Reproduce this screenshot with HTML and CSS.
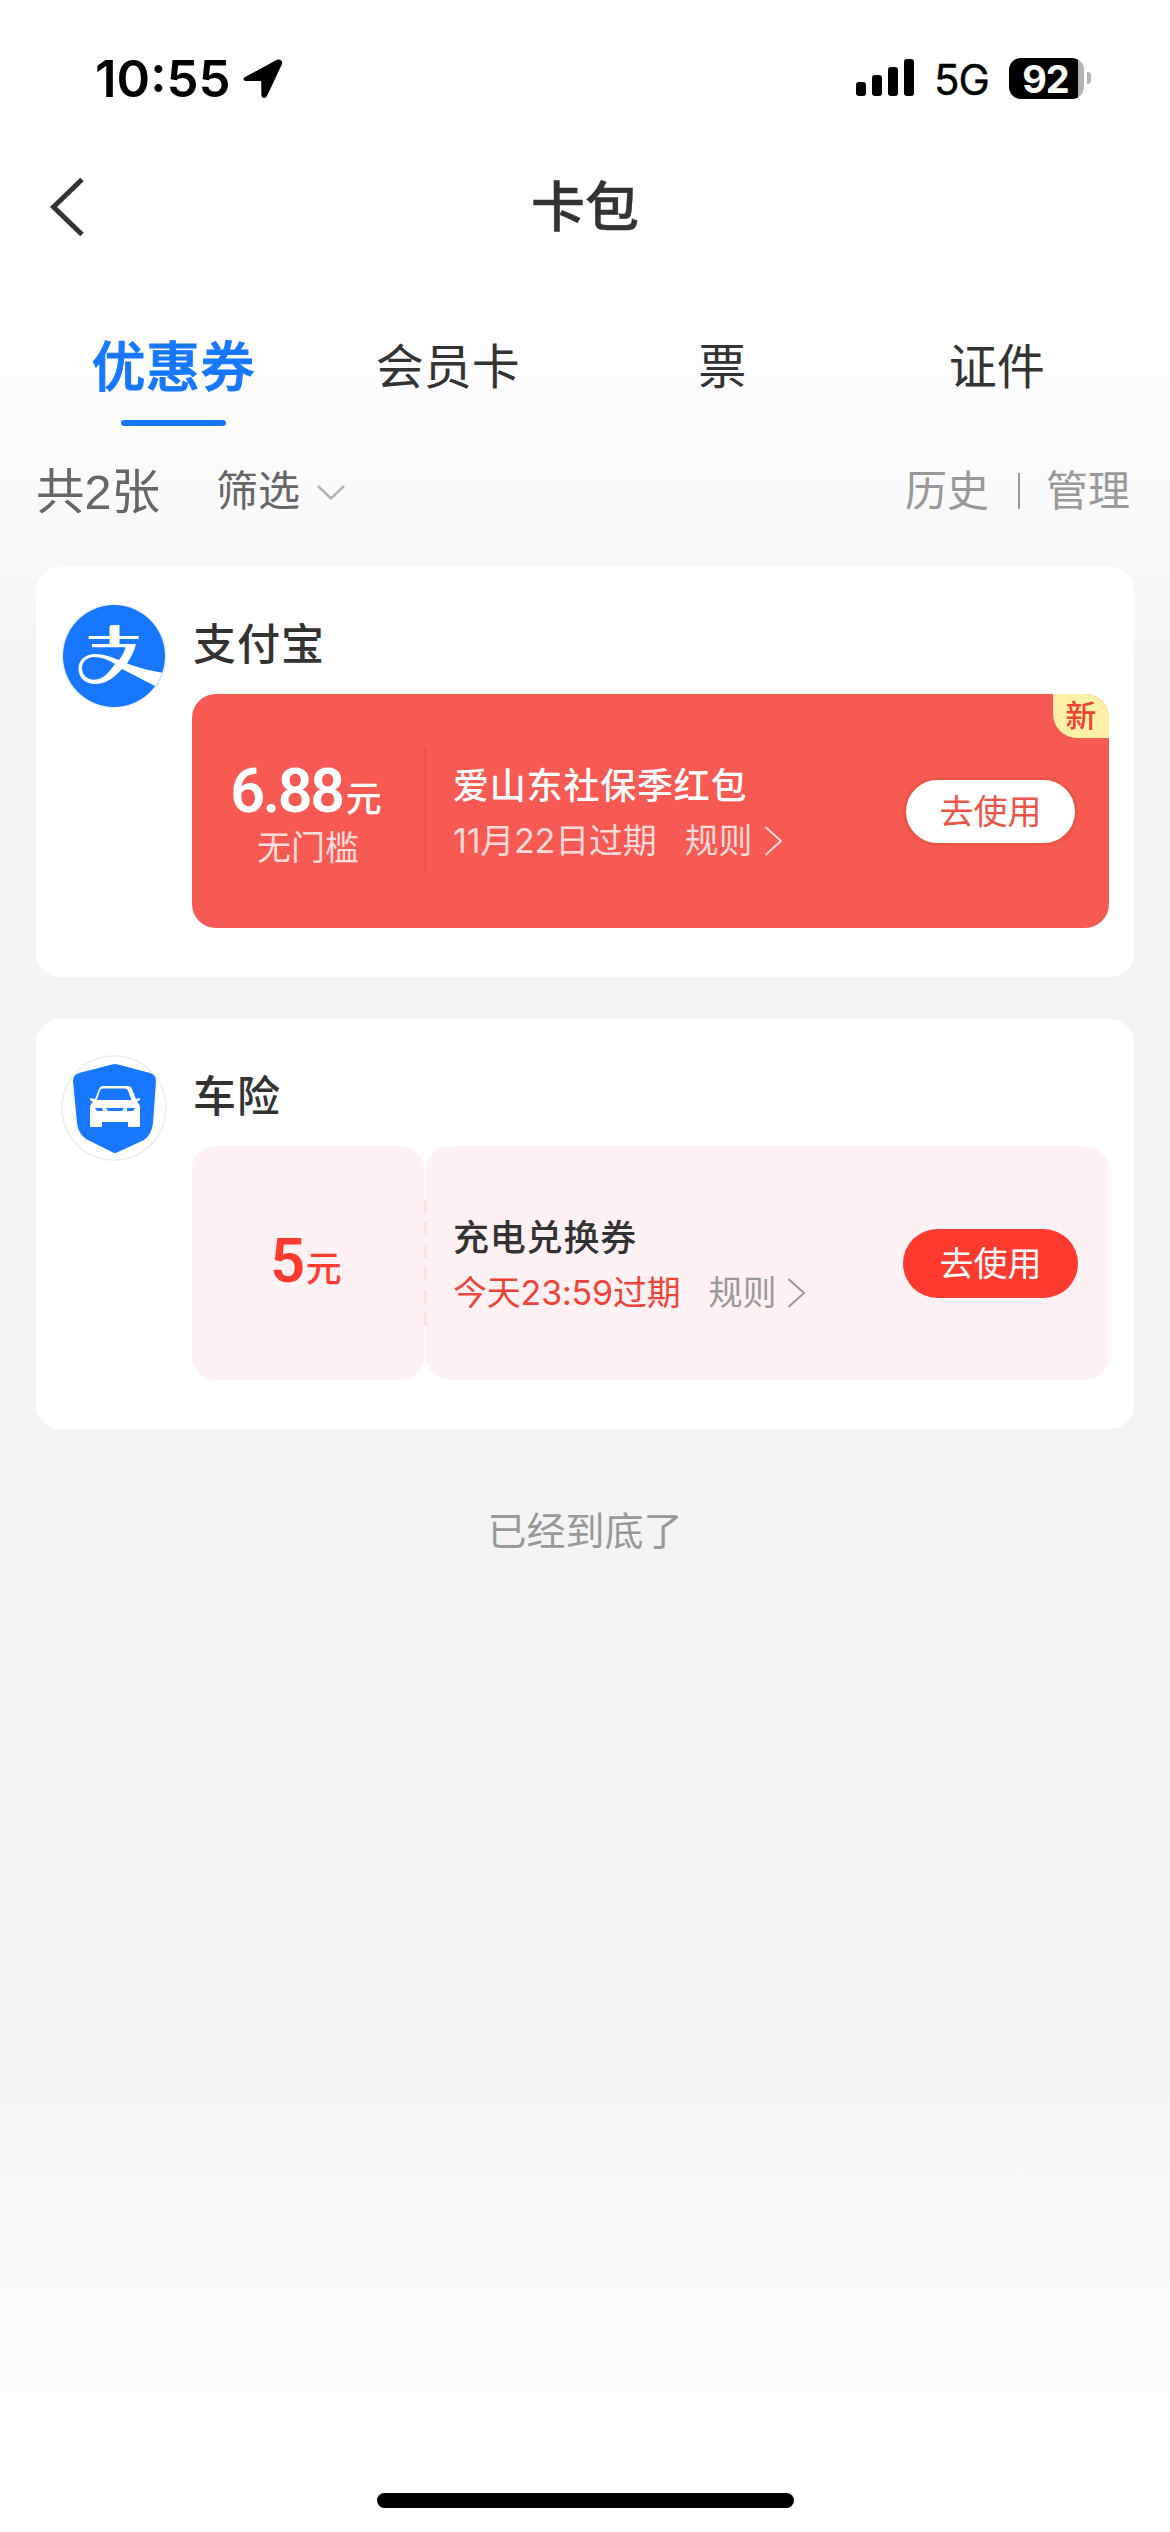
FILE: index.html
```html
<!DOCTYPE html>
<html lang="zh-CN">
<head>
<meta charset="utf-8">
<title>卡包</title>
<link rel="stylesheet" href="styles.css">
</head>
<body>
<header class="status">
  <div class="status-left">
    <span class="time">10:55</span>
    <svg class="location" width="40" height="40" viewBox="0 0 40 40"><path d="M3 17.500 33.500 1C37 -.6 40.300 2 38.800 5.500L24 37C22.600 40 18.500 39.500 18.400 36L18.200 22H4C-.2 22-.8 19.300 3 17.500Z"/></svg>
  </div>
  <div class="status-right">
    <svg class="signal" width="58" height="38" viewBox="0 0 58 38"><rect y="23" width="10" height="14" rx="3"/><rect x="16" y="16" width="10" height="21" rx="3"/><rect x="32" y="8" width="10" height="29" rx="3"/><rect x="48" width="10" height="37" rx="3"/></svg>
    <span class="network">5G</span>
    <div class="battery"><span class="battery-level">92</span></div>
    <span class="battery-tip"></span>
  </div>
</header>
<nav class="navbar">
  <svg class="back" width="36" height="58" viewBox="0 0 36 58"><path d="M33 1.500 4.500 29 33 56.500"/></svg>
  <h1 class="page-title">卡包</h1>
</nav>
<div class="tabs">
  <a class="tab tab-active">优惠券</a>
  <a class="tab">会员卡</a>
  <a class="tab">票</a>
  <a class="tab">证件</a>
</div>
<div class="toolbar">
  <span class="count">共2张</span>
  <span class="filter">筛选</span>
  <svg class="filter-arrow" width="28" height="16" viewBox="0 0 28 16"><path d="M1 1 14 13.500 27 1"/></svg>
  <span class="action">历史</span>
  <span class="divider"></span>
  <span class="action">管理</span>
</div>
<main class="cards">
  <section class="card">
    <svg class="logo" width="108" height="108" viewBox="0 0 108 108">
      <defs><clipPath id="disc"><circle cx="54" cy="54" r="51"/></clipPath></defs>
      <circle cx="54" cy="54" r="52.500" fill="#e8f0fc"/>
      <circle cx="54" cy="54" r="51" fill="#1777ff"/>
      <g clip-path="url(#disc)" fill="#fff">
        <path d="M49.500 25q0-2 2-2H59.500V42H49.500ZM28.700 34H78.700V37H28.700Z"/>
        <path fill-rule="evenodd" d="M32 42H76C74 50 70.500 56 67 61.500C79 66 91 69 104 71L97 85C85 79 74 73 62 67C53 77 45 82 35 82C25 82 18.500 75.500 18.500 66.500C18.500 57.500 26 52 35 52C44 52 51 55 59 58C62 54 64.500 50 65.500 45.300H32ZM55 62C48 57.500 41 55 34 55C27 55 22 60 22 66C22 73 27 77.700 34 77.700C43 77.700 49 70.500 55 62Z"/>
      </g>
    </svg>
    <div class="card-body">
      <h2 class="merchant">支付宝</h2>
      <div class="coupon coupon-red">
        <div class="value">
          <div class="amount"><span class="number">6.88</span><span class="unit">元</span></div>
          <div class="condition">无门槛</div>
        </div>
        <span class="seam"></span>
        <div class="info">
          <h3 class="coupon-title">爱山东社保季红包</h3>
          <div class="meta"><span class="expiry">11月22日过期</span><span class="rule">规则</span><svg class="rule-arrow" width="20" height="30" viewBox="0 0 20 30"><path d="M1.500 1 17 15 1.500 29"/></svg></div>
        </div>
        <a class="use">去使用</a>
        <span class="badge">新</span>
      </div>
    </div>
  </section>
  <section class="card">
    <svg class="logo" width="108" height="108" viewBox="0 0 108 108">
      <circle cx="54" cy="54" r="52" fill="#fff" stroke="#ececee" stroke-width="1.500"/>
      <path fill="#1777ff" d="M52 10.500q3-1 6 0L90 19q6 2 6 8l-3 42q-1 11-9 17L58 98q-3 2-6 0L26 85q-8-6-9-16L13 27q0-6 6-8Z"/>
      <path fill="#fff" d="M43 32h24q4 0 5 3l4 10 4-1v2l-3 2q3 2 3 6v18q0 1-1 1H69q-1 0-1-1v-4H42v4q0 1-1 1H31q-1 0-1-1V54q0-4 3-6l-3-2v-2l5 1 4-10q1-3 4-3Z"/>
      <path fill="#1777ff" d="M43 34.500h22q2 0 3 2l3.500 9.500H37l3-9.500q1-2 3-2ZM35 54h7l1 3h-6ZM46 54h18l-2 3H48ZM67 54h8l-2 3h-6Z"/>
    </svg>
    <div class="card-body">
      <h2 class="merchant">车险</h2>
      <div class="coupon coupon-pink">
        <div class="value">
          <div class="amount"><span class="number">5</span><span class="unit">元</span></div>
        </div>
        <span class="seam"></span>
        <div class="info">
          <h3 class="coupon-title">充电兑换券</h3>
          <div class="meta"><span class="expiry">今天23:59过期</span><span class="rule">规则</span><svg class="rule-arrow" width="20" height="30" viewBox="0 0 20 30"><path d="M1.500 1 17 15 1.500 29"/></svg></div>
        </div>
        <a class="use">去使用</a>
      </div>
    </div>
  </section>
</main>
<p class="end">已经到底了</p>
<div class="home"></div>
</body>
</html>
```
FILE: styles.css
```css
* { box-sizing: border-box; }
body {
  margin: 0;
  width: 1170px;
  height: 2532px;
  display: flex;
  flex-direction: column;
  overflow: hidden;
  font-family: "Liberation Sans", "Noto Sans CJK SC", sans-serif;
  color: #333;
  background: linear-gradient(#fff 0, #fff 290px, #fafafa 480px, #f4f4f4 700px, #f4f4f4 2030px, #fff 2490px);
}
h1, h2, h3, p { margin: 0; font-weight: 500; }

.status {
  height: 156px;
  padding: 0 79px 0 95px;
  display: flex;
  justify-content: space-between;
  color: #000;
  font-family: Inter, sans-serif;
}
.status-left, .status-right { display: flex; height: 156px; align-items: center; }
.time { font-size: 51px; font-weight: 600; letter-spacing: 0; line-height: 60px; width: 148px; padding-top: 1px; white-space: nowrap; }
.location { margin-top: 1px; }
.network { margin: 4px 0 0 20px; width: 56px; font-size: 42px; font-weight: 400; letter-spacing: -1px; line-height: 50px; -webkit-text-stroke: .4px #000; }
.battery {
  margin-left: 19px;
  width: 75px;
  height: 41px;
  border-radius: 12px;
  background: linear-gradient(90deg, #000 69px, #b3b3b3 69px);
  color: #fff;
}
.battery-level { display: block; width: 73px; text-align: center; font-size: 38px; font-weight: 700; line-height: 42px; letter-spacing: -1px; }
.battery-tip { width: 4px; height: 12px; margin-left: 3px; border-radius: 0 4px 4px 0; background: #b3b3b3; }

.navbar { height: 102px; display: grid; grid-template-columns: 120px 1fr 120px; align-items: center; }
.back { margin-left: 49px; fill: none; stroke: #333; stroke-width: 5; }
.page-title { padding-top: 2px; text-align: center; font-size: 54px; line-height: 80px; -webkit-text-stroke: .5px #333; }

.tabs { height: 168px; padding: 60px 36px 0; display: grid; grid-template-columns: repeat(4, 1fr); }
.tab { font-size: 48px; line-height: 100px; text-align: center; }
.tab-active { display: flex; flex-direction: column; align-items: center; font-size: 54px; font-weight: 500; letter-spacing: .5px; color: #1777ff; -webkit-text-stroke: 1px #1777ff; }
.tab-active::after { content: ""; width: 105px; height: 6px; margin-top: 2px; border-radius: 3px; background: #1777ff; }

.toolbar { height: 141px; padding: 30px 40px 0 36px; display: flex; color: #666; line-height: 72px; }
.count { width: 180px; font-size: 48.5px; }
.filter { width: 101px; font-size: 42px; }
.filter-arrow { margin: 29px auto 0 0; fill: none; stroke: #b5b5b5; stroke-width: 2.5; }
.action { font-size: 42px; color: #999; }
.divider { width: 2px; height: 36px; margin: 17px 26px 0 29px; background: #999; }

.cards { display: grid; gap: 42px; padding: 0 36px; }
.card { height: 410px; padding: 35px 25px 0 24px; display: flex; border-radius: 24px; background: #fff; }
.logo { flex: none; width: 108px; height: 108px; }
.card-body { flex: 1; margin-left: 24px; }
.merchant { height: 92px; padding: 11px 0 0 1px; font-size: 43px; letter-spacing: 1px; line-height: 64px; }
.coupon { position: relative; height: 234px; display: flex; align-items: center; border-radius: 24px; }
.value { width: 232px; text-align: center; }
.amount { display: flex; justify-content: center; align-items: baseline; padding: 4px 4px 0 0; line-height: 60px; }
.number { font-family: Roboto, sans-serif; font-size: 61px; font-weight: 600; letter-spacing: -2.3px; }
.unit { margin-left: 3px; font-size: 36px; font-weight: 500; }
.condition { font-size: 34px; line-height: 36px; opacity: .8; }
.info { flex: 1; padding: 5px 0 0 27px; }
.coupon-title { font-size: 36px; letter-spacing: .8px; line-height: 55px; }
.meta { display: flex; align-items: center; font-size: 34px; line-height: 54px; }
.expiry { font-family: Inter, "Noto Sans CJK SC", sans-serif; letter-spacing: -.2px; }
.rule { margin: 0 11px 0 28px; }
.rule-arrow { fill: none; stroke: currentColor; stroke-width: 2; }
.use { width: 175px; height: 69px; margin-right: 31px; padding-top: 1px; border-radius: 35px; font-size: 34px; line-height: 69px; text-align: center; }

.coupon-red { background: #f75953; color: #fff; }
.coupon-red .seam { width: 2px; height: 124px; background: #ef5049; }
.coupon-red .meta { color: rgba(255, 255, 255, .78); }
.coupon-red .use { border: 3px solid #ea5548; background: #fff; color: #ea5548; line-height: 63px; }
.badge {
  position: absolute;
  top: 0;
  right: 0;
  width: 56px;
  height: 44px;
  border-radius: 0 24px 0 24px;
  background: #fff0a8;
  color: #ee4433;
  font-size: 31px;
  font-weight: 500;
  line-height: 46px;
  text-align: center;
}

.coupon-pink .value, .coupon-pink .info { height: 234px; border-radius: 24px; background: #fef1f3; }
.coupon-pink .value { display: grid; place-content: center; color: #ff3b30; }
.coupon-pink .seam { width: 3px; height: 126px; margin: 0 -1px 0 0; z-index: 1; background: repeating-linear-gradient(#fbe0e4 0 13px, #fef1f3 13px 22.4px); }
.coupon-pink .info { margin-right: -206px; padding-top: 65px; }
.coupon-pink .use { position: relative; background: #ff3b30; color: #fff; }
.coupon-pink .expiry { color: #ee443a; }
.coupon-pink .rule, .coupon-pink .rule-arrow { color: #999; }

.end { margin-top: 74px; text-align: center; font-size: 39px; line-height: 58px; color: #999; font-weight: 400; }
.home { width: 417px; height: 15px; margin: auto auto 24px; border-radius: 8px; background: #000; }
```
